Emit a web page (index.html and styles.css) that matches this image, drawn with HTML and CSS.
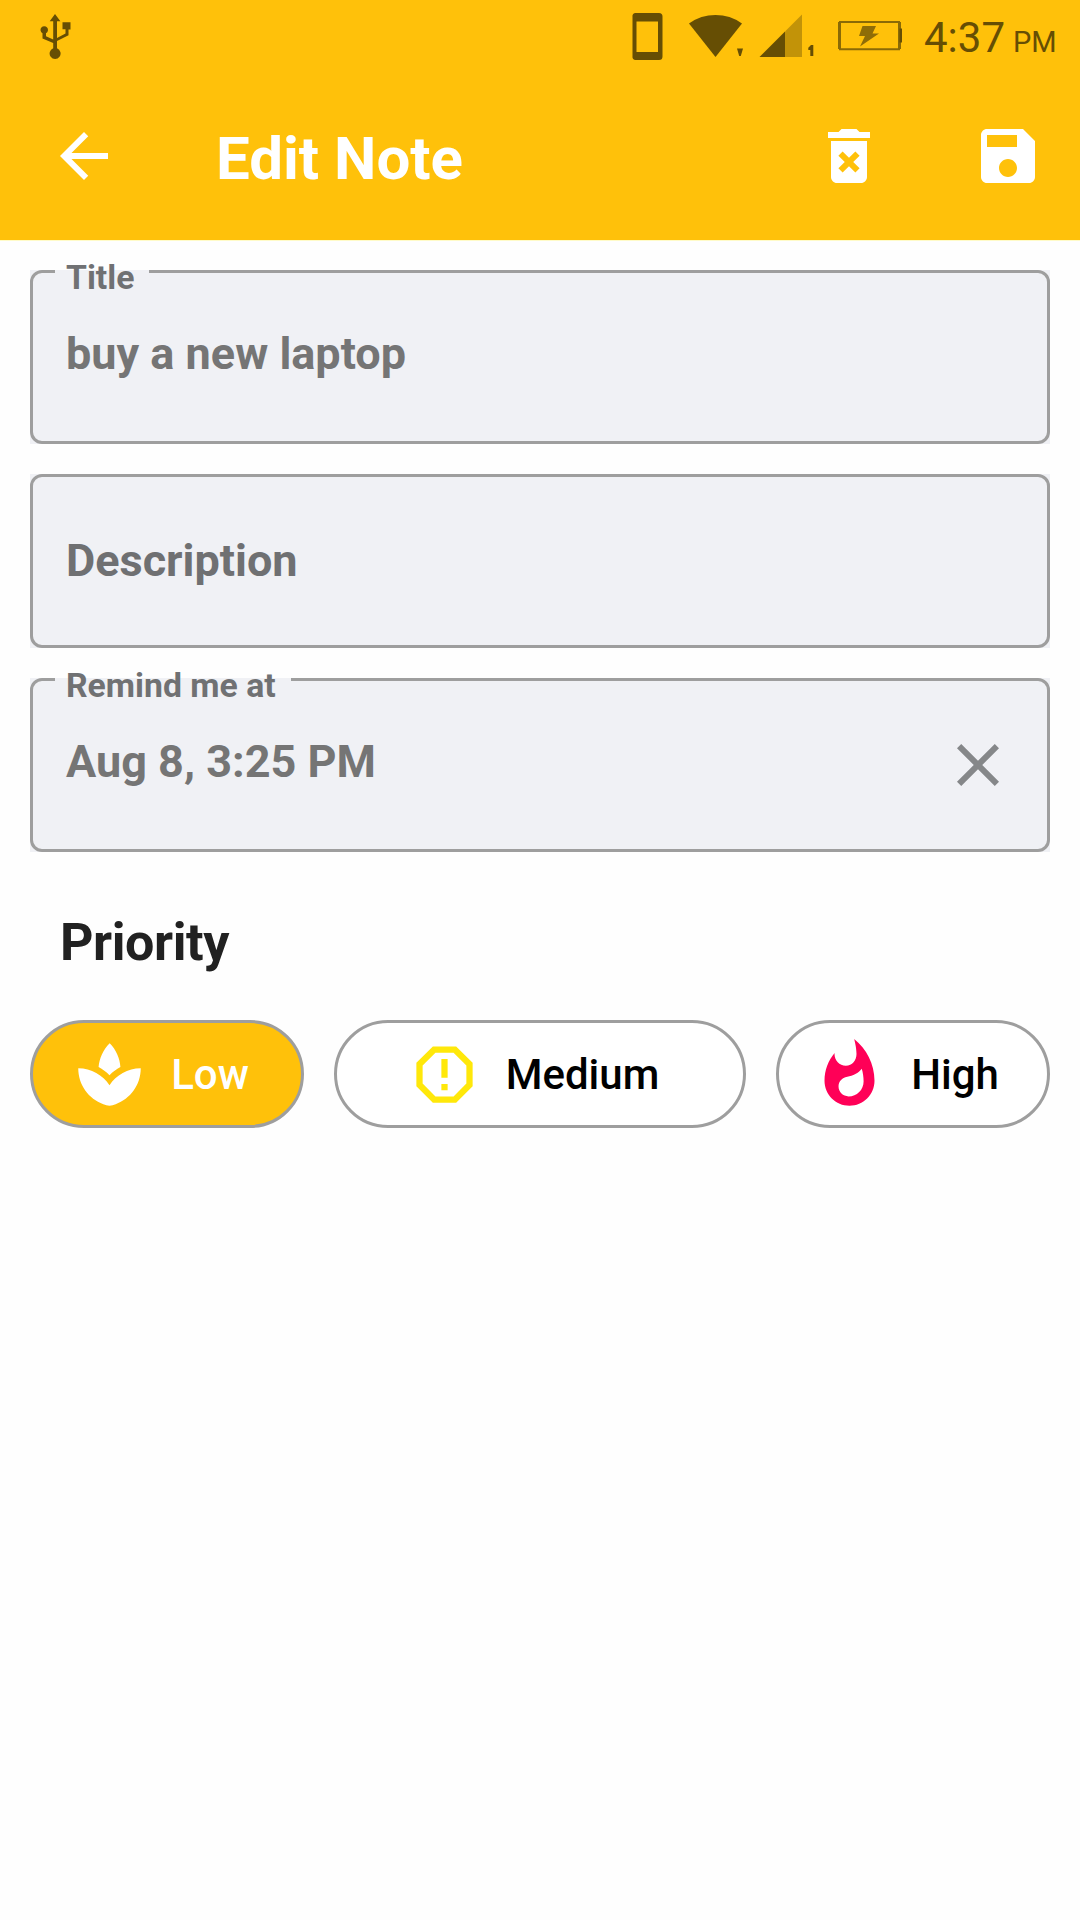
FILE: index.html
```html
<!DOCTYPE html>
<html lang="en">
<head>
<meta charset="utf-8">
<title>Edit Note</title>
<link rel="stylesheet" href="styles.css">
</head>
<body>
<div class="screen">
  <header class="header">
    <div class="status">
      <svg class="status-usb" width="32" height="46" viewBox="0 0 32 46">
        <path d="M15 0 20.400 7.200h-3.400V24L25.500 19.600V15.200H22.500V8.300h8v7.200h-2V21.200L17 27V34.300A5.500 5.500 0 1 1 13.200 34.300V29L2.500 24.500V19.200A3.700 3.700 0 1 1 6 19.200V22.300L13.200 25.500V7.200H9.700Z"/>
      </svg>
      <div class="status-right">
        <svg class="status-icons" width="190" height="50" viewBox="632 10 190 50">
          <path fill-rule="evenodd" d="M635.500 13h23.500a3.500 3.500 0 0 1 3.500 3.500v40a3.500 3.500 0 0 1-3.500 3.500h-23.500a3 3 0 0 1-3-3.500v-40a3 3 0 0 1 3-3.500ZM636.500 21.500V52h21.500V21.500Z"/>
          <path d="M689 23.500A46 46 0 0 1 742 23.500L715.500 57Z"/>
          <path d="M737 48.500h6L740.800 56h-1.600Z"/>
          <path class="signal-off" d="M785 31.500 802 14.500V57H785Z"/>
          <path d="M759.500 57 785 31.500V57Z"/>
          <path d="M811 45h2.300V56h-3V50h-2V47.800Z"/>
        </svg>
        <svg class="status-battery" width="66" height="32" viewBox="838 20 66 32">
          <path class="battery-side" d="M840.500 22V49M900.500 22V49"/>
          <path class="battery-edge" d="M840 22H901M840 49.200H901"/>
          <path d="M900.500 28.500h2.500v14h-2.500Z"/>
          <path class="battery-bolt" d="M863.500 26H877L873.500 33.500H880L861 46.500 866 36H860Z"/>
        </svg>
        <div class="clock">4:37<span class="meridiem">PM</span></div>
      </div>
    </div>
    <div class="toolbar">
      <svg class="icon" viewBox="0 0 24 24"><path d="M20 11H7.830l5.590-5.590L12 4l-8 8 8 8 1.410-1.410L7.830 13H20v-2z"/></svg>
      <h1 class="title">Edit Note</h1>
      <svg class="icon" viewBox="0 0 24 24"><path d="M6 19c0 1.100.900 2 2 2h8c1.100 0 2-.9 2-2V7H6v12zm2.460-7.120l1.410-1.410L12 12.590l2.120-2.120 1.410 1.410L13.410 14l2.120 2.120-1.410 1.410L12 15.410l-2.120 2.120-1.410-1.410L10.590 14l-2.130-2.120zM15.500 4l-1-1h-5l-1 1H5v2h14V4z"/></svg>
      <svg class="icon icon-save" viewBox="0 0 24 24"><path d="M17 3H5c-1.110 0-2 .9-2 2v14c0 1.100.890 2 2 2h14c1.100 0 2-.9 2-2V7l-4-4zm-5 16c-1.660 0-3-1.340-3-3s1.340-3 3-3 3 1.340 3 3-1.340 3-3 3zm3-10H5V5h10v4z"/></svg>
    </div>
  </header>
  <main class="form">
    <div class="field">
      <div class="outline">
        <span class="label">Title</span>
        <span class="value">buy a new laptop</span>
      </div>
    </div>
    <div class="field">
      <div class="outline">
        <span class="value value-empty">Description</span>
      </div>
    </div>
    <div class="field">
      <div class="outline">
        <span class="label">Remind me at</span>
        <span class="value">Aug 8, 3:25 PM</span>
        <svg class="icon clear" viewBox="0 0 24 24"><path d="M19 6.410L17.590 5 12 10.590 6.410 5 5 6.410 10.590 12 5 17.590 6.410 19 12 13.410 17.590 19 19 17.590 13.410 12z"/></svg>
      </div>
    </div>
    <h2 class="heading">Priority</h2>
    <div class="chips">
      <div class="chip chip-low">
        <svg class="chip-icon" viewBox="0 0 24 24"><path d="M15.490 9.630c-.18-2.790-1.310-5.510-3.430-7.630-2.140 2.140-3.320 4.860-3.550 7.630 1.280.680 2.460 1.560 3.490 2.630 1.030-1.060 2.210-1.940 3.490-2.630zM12 15.450C9.850 12.170 6.180 10 2 10c0 5.320 3.360 9.820 8.030 11.490.630.230 1.290.400 1.970.510.680-.12 1.330-.29 1.970-.51C18.640 19.820 22 15.320 22 10c-4.180 0-7.850 2.170-10 5.450z"/></svg>
        <span>Low</span>
      </div>
      <div class="chip chip-medium">
        <svg class="chip-icon" viewBox="0 0 24 24"><path d="M15.730 3H8.270L3 8.270v7.460L8.270 21h7.460L21 15.730V8.270L15.730 3zM19 14.900L14.900 19H9.100L5 14.900V9.100L9.100 5h5.800L19 9.100v5.800zM11 7h2v6h-2zM11 15h2v2h-2z"/></svg>
        <span>Medium</span>
      </div>
      <div class="chip chip-high">
        <svg class="chip-icon" viewBox="0 0 24 24"><path d="M13.500.670s.740 2.650.740 4.800c0 2.060-1.350 3.730-3.410 3.730-2.070 0-3.630-1.670-3.630-3.730l.030-.36C5.210 7.510 4 10.620 4 14c0 4.420 3.580 8 8 8s8-3.580 8-8C20 8.610 17.410 3.800 13.500.670zM11.710 19c-1.780 0-3.220-1.400-3.220-3.140 0-1.620 1.050-2.760 2.810-3.120 1.770-.36 3.600-1.210 4.620-2.580.390 1.290.590 2.650.590 4.040 0 2.650-2.150 4.800-4.800 4.800z"/></svg>
        <span>High</span>
      </div>
    </div>
  </main>
</div>
</body>
</html>
```

FILE: styles.css
```css
* {
  box-sizing: border-box;
}

body {
  margin: 0;
  background: #fff;
  font-family: Roboto, "Liberation Sans", sans-serif;
}

.screen {
  width: 1080px;
  height: 1920px;
  overflow: hidden;
  background: #fefefe;
}

.header {
  height: 241px;
  background: #ffc10a;
  border-bottom: 1px solid #fffbc8;
}

.status {
  display: flex;
  justify-content: space-between;
  height: 72px;
  padding: 0 24px 0 40px;
  color: #664e04;
  fill: #664e04;
}

.status-usb {
  margin-top: 14px;
}

.status-right {
  display: flex;
}

.status-icons {
  margin-top: 10px;
}

.signal-off {
  fill: #c29308;
}

.status-battery {
  margin: 20px 0 0 15px;
}

.battery-side,
.battery-edge {
  fill: none;
  stroke: #8a6a06;
  stroke-width: 3;
}

.battery-edge {
  stroke-width: 2;
}

.battery-bolt {
  fill: #8f6d07;
}

.clock {
  display: flex;
  align-items: baseline;
  width: 132px;
  margin-left: 21px;
  font-size: 42px;
  line-height: 76px;
  white-space: nowrap;
}

.meridiem {
  margin-left: 8px;
  font-size: 29px;
}

.toolbar {
  display: flex;
  align-items: flex-start;
  height: 168px;
  padding: 48px 36px 0 48px;
}

.icon {
  flex: none;
  width: 72px;
  height: 72px;
  fill: #fff;
}

.icon-save {
  margin-left: 87px;
}

.title {
  flex: 1;
  margin: 0 0 0 96px;
  color: #fff;
  font-size: 60px;
  font-weight: 700;
  line-height: 78px;
}

.form {
  display: flex;
  flex-direction: column;
  gap: 30px;
  padding: 29px 30px 0;
}

.field {
  height: 174px;
  background: #f0f1f5;
}

.outline {
  position: relative;
  display: flex;
  height: 174px;
  padding: 0 33px;
  border: 3px solid #9e9e9e;
  border-radius: 12px;
  color: #757575;
  font-weight: 700;
}

.label {
  position: absolute;
  z-index: 0;
  top: -14px;
  left: 22px;
  padding: 0 15px 0 11px;
  color: #707173;
  font-size: 33.75px;
  line-height: 38px;
  white-space: nowrap;
}

/* opens the gap in the outline behind the floating label */
.label::before {
  content: "";
  position: absolute;
  z-index: -1;
  top: 11px;
  left: 0;
  width: 100%;
  height: 3px;
  background: #f0f1f5;
}

.value {
  flex: 1;
  padding-top: 54px;
  font-size: 45px;
  line-height: 54px;
}

.value-empty {
  padding-top: 57px;
  color: #6f7072;
}

.clear {
  margin: 48px 0 0;
  fill: #858789;
}

.heading {
  margin: 30px 0 0 30px;
  color: #212121;
  font-size: 52px;
  font-weight: 700;
  letter-spacing: -0.4px;
  line-height: 62px;
}

.chips {
  display: grid;
  grid-template-columns: 274fr 412fr 274fr;
  gap: 30px;
  margin-top: 16px;
}

.chip {
  display: flex;
  align-items: center;
  justify-content: center;
  gap: 24px;
  height: 108px;
  padding-right: 13px;
  border: 3px solid #9e9e9e;
  border-radius: 54px;
  background: #fff;
  color: #000;
  font-size: 42px;
  font-weight: 500;
}

.chip-icon {
  flex: none;
  width: 75px;
  height: 75px;
}

.chip-low {
  background: #ffc10a;
  color: #fff;
  fill: #fff;
}

.chip-medium {
  padding-right: 14px;
  fill: #ffe80a;
}

.chip-high {
  padding-right: 15px;
  fill: #ff0057;
}
```
